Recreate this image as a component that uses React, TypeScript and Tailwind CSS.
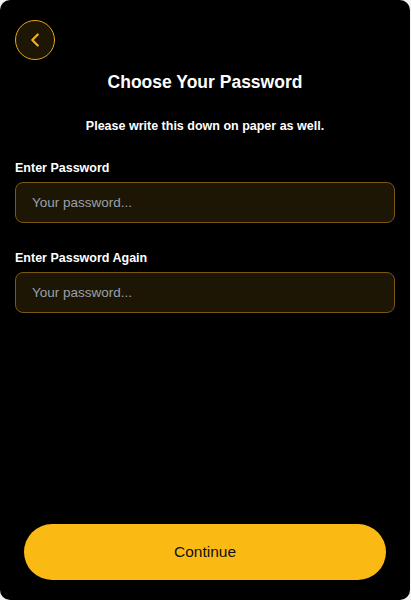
import { ChevronLeft } from "lucide-react";

function PasswordField({ label }: { label: string }) {
  return (
    <div className="flex flex-col gap-[6px]">
      <label className="text-[12.5px] font-semibold leading-4 text-white">{label}</label>
      <input
        type="password"
        placeholder="Your password..."
        className="h-[41px] w-full rounded-lg border border-[#7a5810] bg-[#1e1604] px-4 text-[13.5px] font-medium text-white outline-none placeholder:text-[#9aa1ad]"
      />
    </div>
  );
}

export default function App() {
  return (
    <div
      className="h-[600px] w-[411px] bg-[#f2f2f2]"
      style={{ fontFamily: '"Liberation Sans", Arial, sans-serif' }}
    >
      <div className="flex h-[600px] w-[410px] flex-col rounded-[10px] bg-black px-[15px] pb-[20px] pt-[20px]">
        <button className="flex h-[40px] w-[40px] items-center justify-center rounded-full border border-[#e3a514] bg-[#1e1604] text-[#f2b21a]">
          <ChevronLeft size={22} strokeWidth={2.4} />
        </button>

        <h1 className="mt-[10px] text-center text-[17.5px] font-bold leading-6 text-white">
          Choose Your Password
        </h1>
        <p className="mt-[24px] text-center text-[12.5px] font-semibold leading-4 text-white">
          Please write this down on paper as well.
        </p>

        <div className="mt-[26px] flex flex-col gap-[27px]">
          <PasswordField label="Enter Password" />
          <PasswordField label="Enter Password Again" />
        </div>

        <div className="mt-auto px-[9px]">
          <button className="h-[56px] w-full rounded-full bg-[#fbb914] text-[15.5px] text-[#111]">
            Continue
          </button>
        </div>
      </div>
    </div>
  );
}
